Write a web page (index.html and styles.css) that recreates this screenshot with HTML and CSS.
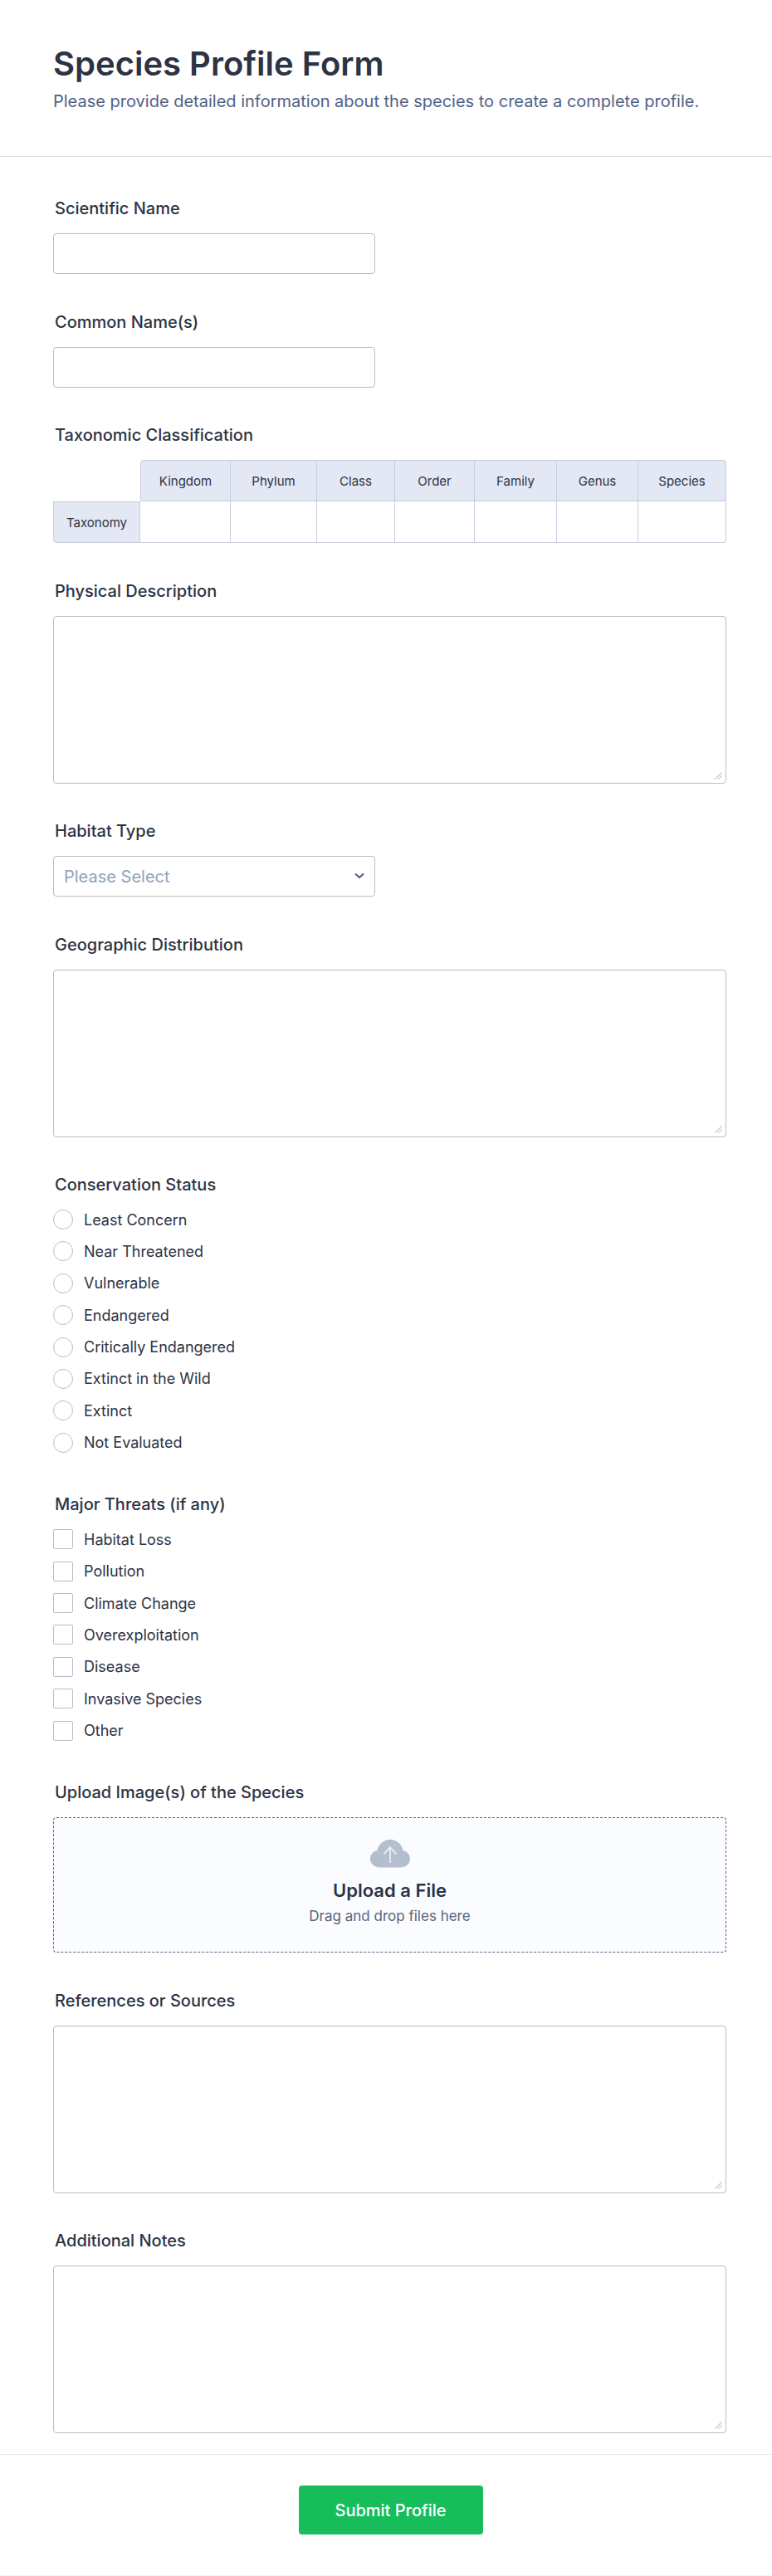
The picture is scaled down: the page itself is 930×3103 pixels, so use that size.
FILE: index.html
```html
<!DOCTYPE html>
<html lang="en">
<head>
<meta charset="utf-8">
<title>Species Profile Form</title>
<link rel="stylesheet" href="styles.css">
</head>
<body>
<form class="form">
  <header class="form-header">
    <h1 class="form-title">Species Profile Form</h1>
    <p class="form-subtitle">Please provide detailed information about the species to create a complete profile.</p>
  </header>
  <div class="form-body">
    <div class="field">
      <label class="label">Scientific Name</label>
      <input class="input" type="text">
    </div>
    <div class="field">
      <label class="label">Common Name(s)</label>
      <input class="input" type="text">
    </div>
    <div class="field">
      <label class="label">Taxonomic Classification</label>
      <div class="matrix">
        <div class="cell corner"></div>
        <div class="cell head head-first">Kingdom</div>
        <div class="cell head">Phylum</div>
        <div class="cell head">Class</div>
        <div class="cell head">Order</div>
        <div class="cell head">Family</div>
        <div class="cell head">Genus</div>
        <div class="cell head head-last">Species</div>
        <div class="cell row-head">Taxonomy</div>
        <div class="cell body"></div>
        <div class="cell body"></div>
        <div class="cell body"></div>
        <div class="cell body"></div>
        <div class="cell body"></div>
        <div class="cell body"></div>
        <div class="cell body body-last"></div>
      </div>
    </div>
    <div class="field">
      <label class="label">Physical Description</label>
      <div class="textarea-wrap">
        <textarea class="textarea"></textarea>
        <svg class="grip" width="9" height="9" viewBox="0 0 9 9"><path d="M0.500 8.500 8.500 0.500M4.500 8.500 8.500 4.500" stroke="#c2c7d3" stroke-width="1.200"/></svg>
      </div>
    </div>
    <div class="field">
      <label class="label">Habitat Type</label>
      <div class="select-wrap">
        <select class="select"><option>Please Select</option></select>
        <svg class="chevron" width="12" height="8" viewBox="0 0 12 8"><path d="M1 1.500 6 6l5-4.500" fill="none" stroke="#57647e" stroke-width="2.200"/></svg>
      </div>
    </div>
    <div class="field">
      <label class="label">Geographic Distribution</label>
      <div class="textarea-wrap">
        <textarea class="textarea"></textarea>
        <svg class="grip" width="9" height="9" viewBox="0 0 9 9"><path d="M0.500 8.500 8.500 0.500M4.500 8.500 8.500 4.500" stroke="#c2c7d3" stroke-width="1.200"/></svg>
      </div>
    </div>
    <div class="field">
      <label class="label">Conservation Status</label>
      <div class="options">
        <label class="option"><input class="radio" type="radio" name="status"><span>Least Concern</span></label>
        <label class="option"><input class="radio" type="radio" name="status"><span>Near Threatened</span></label>
        <label class="option"><input class="radio" type="radio" name="status"><span>Vulnerable</span></label>
        <label class="option"><input class="radio" type="radio" name="status"><span>Endangered</span></label>
        <label class="option"><input class="radio" type="radio" name="status"><span>Critically Endangered</span></label>
        <label class="option"><input class="radio" type="radio" name="status"><span>Extinct in the Wild</span></label>
        <label class="option"><input class="radio" type="radio" name="status"><span>Extinct</span></label>
        <label class="option"><input class="radio" type="radio" name="status"><span>Not Evaluated</span></label>
      </div>
    </div>
    <div class="field">
      <label class="label">Major Threats (if any)</label>
      <div class="options">
        <label class="option"><input class="check" type="checkbox"><span>Habitat Loss</span></label>
        <label class="option"><input class="check" type="checkbox"><span>Pollution</span></label>
        <label class="option"><input class="check" type="checkbox"><span>Climate Change</span></label>
        <label class="option"><input class="check" type="checkbox"><span>Overexploitation</span></label>
        <label class="option"><input class="check" type="checkbox"><span>Disease</span></label>
        <label class="option"><input class="check" type="checkbox"><span>Invasive Species</span></label>
        <label class="option"><input class="check" type="checkbox"><span>Other</span></label>
      </div>
    </div>
    <div class="field">
      <label class="label">Upload Image(s) of the Species</label>
      <div class="upload">
        <svg class="cloud" width="48" height="34" viewBox="0 0 48 34">
          <defs>
            <pattern id="dots" width="3" height="3" patternUnits="userSpaceOnUse">
              <rect width="3" height="3" fill="#b8c0cf"/>
              <circle cx="1" cy="1" r="0.500" fill="#8fa8cc"/>
            </pattern>
          </defs>
          <path d="M12 33.500C5 33.500 0 29 0 23c0-5 3.500-9 8.500-10C10 5.500 16 0 24 0s14 5.500 15.500 13C44.500 14 48 18 48 23c0 6-5 10.500-12 10.500Z" fill="url(#dots)"/>
          <path d="M24 28V9M16.500 17.500 24 9l7.500 8.500" fill="none" stroke="#e6e9f1" stroke-width="2"/>
        </svg>
        <div class="upload-title">Upload a File</div>
        <div class="upload-note">Drag and drop files here</div>
      </div>
    </div>
    <div class="field">
      <label class="label">References or Sources</label>
      <div class="textarea-wrap">
        <textarea class="textarea"></textarea>
        <svg class="grip" width="9" height="9" viewBox="0 0 9 9"><path d="M0.500 8.500 8.500 0.500M4.500 8.500 8.500 4.500" stroke="#c2c7d3" stroke-width="1.200"/></svg>
      </div>
    </div>
    <div class="field">
      <label class="label">Additional Notes</label>
      <div class="textarea-wrap">
        <textarea class="textarea"></textarea>
        <svg class="grip" width="9" height="9" viewBox="0 0 9 9"><path d="M0.500 8.500 8.500 0.500M4.500 8.500 8.500 4.500" stroke="#c2c7d3" stroke-width="1.200"/></svg>
      </div>
    </div>
  </div>
  <footer class="form-footer">
    <button class="submit" type="button">Submit Profile</button>
  </footer>
</form>
</body>
</html>
```
FILE: styles.css
```css
* { box-sizing: border-box; }
html, body { margin: 0; padding: 0; background: #fff; }
body { font-family: Inter, "Liberation Sans", sans-serif; color: #2c3345; }
.form { width: 930px; height: 3103px; display: flex; flex-direction: column; }
.form-header { height: 189px; padding: 53px 64px 0; border-bottom: 1px solid #d8dde9; }
.form-title { margin: 0; font-size: 40px; line-height: 48px; font-weight: 600; color: #2c3345; }
.form-subtitle { margin: 7px 0 0; font-size: 20px; line-height: 28px; color: #4f6285; }
.form-body { padding: 52px 55px 0 64px; display: flex; flex-direction: column; gap: 47.500px; flex: 1; }
.field { display: flex; flex-direction: column; align-items: flex-start; }
.label { display: block; height: 20px; line-height: 20px; margin: 0 0 20px 2px; font-size: 20px; font-weight: 500; color: #2c3345; }
.input { display: block; width: 388px; height: 49px; border: 1px solid #b8bdc9; border-radius: 4px; background: #fff; }
.textarea-wrap { position: relative; width: 811px; }
.textarea { display: block; width: 100%; height: 202px; border: 1px solid #b8bdc9; border-radius: 4px; background: #fff; resize: none; padding: 8px; }
.grip { position: absolute; right: 5px; bottom: 5px; pointer-events: none; }
.matrix { width: 811px; display: grid; grid-template-columns: 105px 109px 104px 94px 96px 99px 98px 106px; grid-template-rows: 50px 50px; font-size: 15px; color: #2c3345; }
.cell { display: flex; align-items: center; justify-content: center; border-color: #c9cede; border-style: solid; border-width: 0 1px 1px 0; }
.corner { border: 0; }
.head { background: #e3e8f4; border-top-width: 1px; }
.head-first { border-left-width: 1px; border-top-left-radius: 4px; }
.head-last { border-top-right-radius: 4px; }
.row-head { background: #e3e8f4; border-left-width: 1px; border-top-width: 1px; border-bottom-left-radius: 4px; }
.body { background: #fff; }
.body-last { border-bottom-right-radius: 4px; }
.select-wrap { position: relative; width: 388px; }
.select { display: block; width: 100%; height: 49px; padding: 0 12px; border: 1px solid #b8bdc9; border-radius: 4px; background: #fff; appearance: none; font: 400 20px Inter, sans-serif; color: #8fa3ba; }
.chevron { position: absolute; right: 13px; top: 20px; pointer-events: none; }
.options { display: flex; flex-direction: column; gap: 14.400px; padding-bottom: 5px; }
.option { display: flex; align-items: center; gap: 13px; height: 24px; font-size: 18px; color: #2c3345; }
.radio, .check { appearance: none; margin: 0; width: 24px; height: 24px; border: 1px solid #b8bdc9; background: #fff; flex: none; }
.radio { border-radius: 50%; }
.check { border-radius: 2px; }
.upload { width: 811px; height: 163px; border: 1px dashed #57647e; border-radius: 4px; background: #fbfcff; display: flex; flex-direction: column; align-items: center; padding-top: 26px; }
.cloud { display: block; }
.upload-title { margin-top: 12px; font-size: 22px; line-height: 30px; font-weight: 600; color: #2c3345; }
.upload-note { margin-top: 4px; font-size: 17px; line-height: 24px; color: #57647e; }
.form-footer { height: 147px; border-top: 1px solid #e3e8f4; border-bottom: 1px solid #f3f3fe; display: flex; justify-content: center; padding: 37px 53px 0 64px; }
.submit { width: 222px; height: 59px; border: 0; border-radius: 4px; background: #18bd5b; color: #fff; font: 500 20px Inter, sans-serif; }
```
